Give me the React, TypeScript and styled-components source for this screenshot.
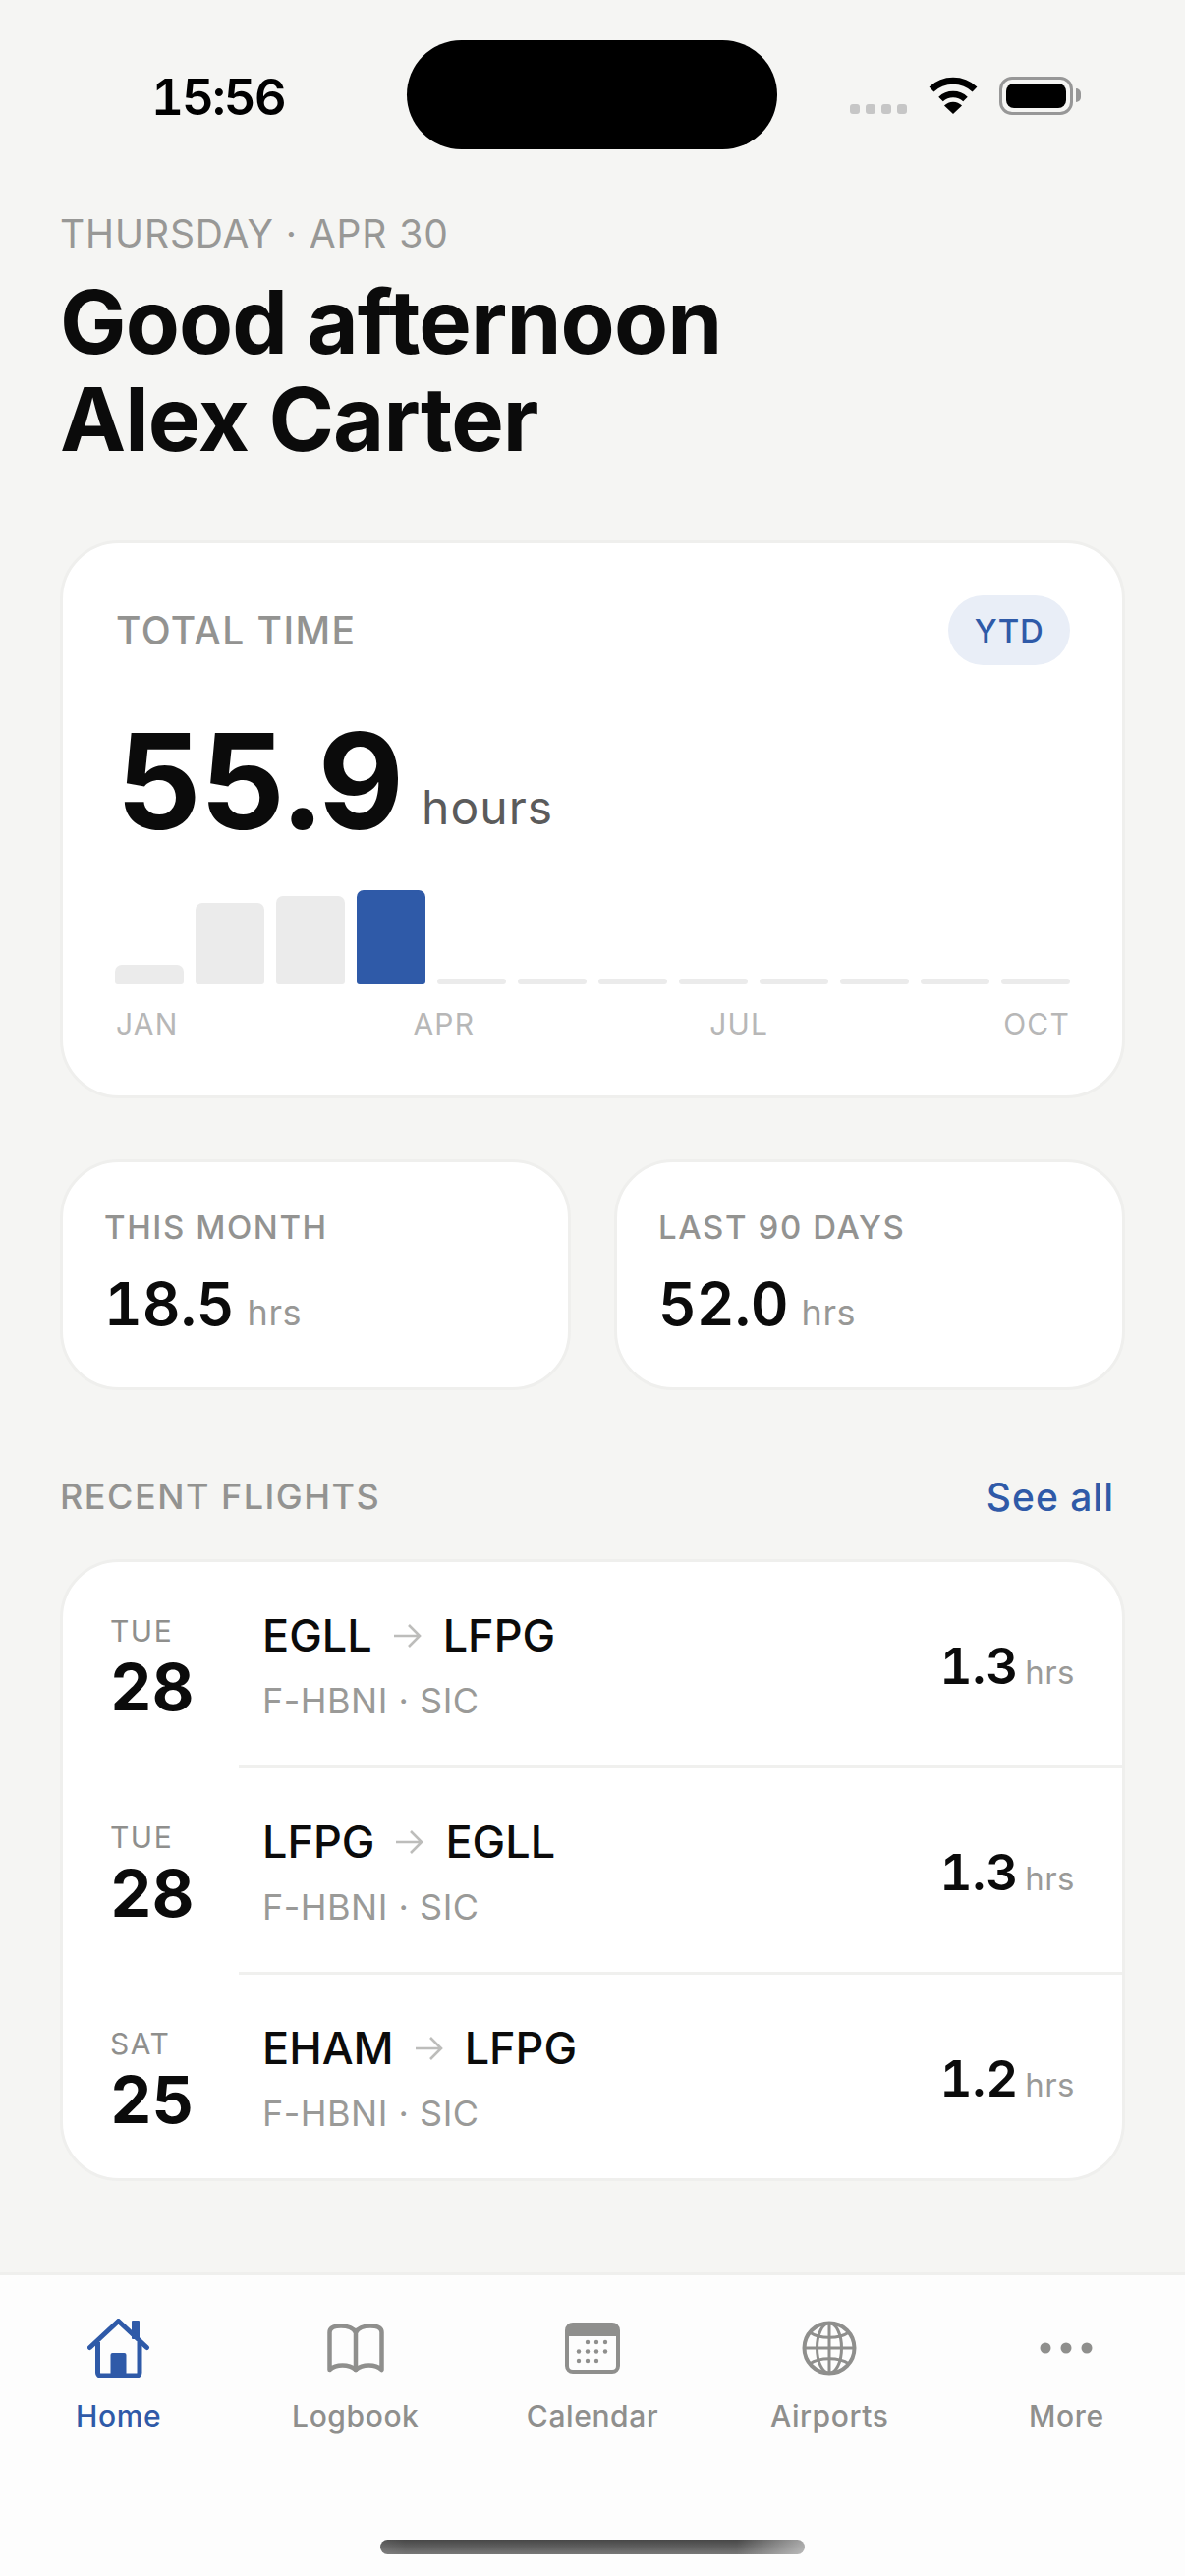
import React from 'react'
import styled, { createGlobalStyle } from 'styled-components'

const blue = '#2f5aa8'
const ink = '#0b0b0b'
const muted = '#8f8f8d'

interface Flight {
  day: string
  date: string
  from: string
  to: string
  hours: string
}

const flights: Flight[] = [
  { day: 'TUE', date: '28', from: 'EGLL', to: 'LFPG', hours: '1.3' },
  { day: 'TUE', date: '28', from: 'LFPG', to: 'EGLL', hours: '1.3' },
  { day: 'SAT', date: '25', from: 'EHAM', to: 'LFPG', hours: '1.2' }
]

const barHeights = [20, 83, 90, 96, 6, 6, 6, 6, 6, 6, 6, 6]

const HomeIcon = () => (
  <svg width="64" height="60" viewBox="0 0 64 60" fill="none">
    <rect x="45" y="2" width="8" height="19" rx="1" fill={blue} />
    <path d="M2.5 29.5 L31.5 2.5 L60.5 29.5" stroke={blue} strokeWidth="5" strokeLinecap="round" strokeLinejoin="round" />
    <path d="M10.5 24 V55 a3 3 0 0 0 3 3 H50 a3 3 0 0 0 3 -3 V24" stroke={blue} strokeWidth="5" />
    <rect x="23.5" y="35" width="16" height="23" rx="2" fill={blue} />
  </svg>
)

const BookIcon = () => (
  <svg width="58" height="50" viewBox="0 0 58 50" fill="none" stroke={muted} strokeWidth="4.5" strokeLinecap="round" strokeLinejoin="round">
    <path d="M29 9 C26 4 20 2.5 14 2.5 C8 2.5 2.5 4 2.5 9 V47 C9 41 22 41 29 47 C36 41 49 41 55.5 47 V9 C55.5 4 50 2.5 44 2.5 C38 2.5 32 4 29 9 Z" />
    <path d="M29 9 V47" />
  </svg>
)

const calendarDots = [
  [23, 20], [32, 20], [41, 20],
  [14, 29.5], [23, 29.5], [32, 29.5], [41, 29.5],
  [14, 39], [23, 39], [32, 39]
]

const CalendarIcon = () => (
  <svg width="56" height="52" viewBox="0 0 56 52" fill="none">
    <rect x="2" y="2" width="52" height="48" rx="6" stroke={muted} strokeWidth="4" />
    <path d="M2 13 V7 a5 5 0 0 1 5 -5 H49 a5 5 0 0 1 5 5 V13 Z" fill={muted} stroke={muted} strokeWidth="2" />
    {calendarDots.map(([x, y]) => (
      <circle key={`${x}-${y}`} cx={x} cy={y} r="2.2" fill={muted} />
    ))}
  </svg>
)

const GlobeIcon = () => (
  <svg width="56" height="56" viewBox="0 0 56 56" fill="none" stroke={muted}>
    <circle cx="28" cy="28" r="25.5" strokeWidth="4" />
    <ellipse cx="28" cy="28" rx="12.5" ry="25.5" strokeWidth="3" />
    <path d="M28 3 V53 M3 28 H53" strokeWidth="3" />
    <path d="M8 12 C18 19 38 19 48 12 M8 44 C18 37 38 37 48 44" strokeWidth="3" />
  </svg>
)

const MoreIcon = () => (
  <svg width="54" height="12" viewBox="0 0 54 12" fill={muted}>
    <circle cx="6" cy="6" r="5.5" />
    <circle cx="27" cy="6" r="5.5" />
    <circle cx="48" cy="6" r="5.5" />
  </svg>
)

const WifiIcon = () => (
  <svg width="50" height="38" viewBox="0 0 50 38" fill="none">
    <path d="M3 13 A32 32 0 0 1 47 13" stroke="#000" strokeWidth="7" />
    <path d="M12.5 23 A18 18 0 0 1 37.5 23" stroke="#000" strokeWidth="6.5" />
    <path d="M25 38 L16 29.5 A12.5 12.5 0 0 1 34 29.5 Z" fill="#000" />
  </svg>
)

const RouteArrow = () => (
  <svg width="28" height="26" viewBox="0 0 28 26" fill="none" stroke="#bdbdbb" strokeWidth="2.6">
    <path d="M0 13 H26 M15 2 L26 13 L15 24" />
  </svg>
)

const tabs = [
  { label: 'Home', icon: <HomeIcon />, active: true },
  { label: 'Logbook', icon: <BookIcon />, active: false },
  { label: 'Calendar', icon: <CalendarIcon />, active: false },
  { label: 'Airports', icon: <GlobeIcon />, active: false },
  { label: 'More', icon: <MoreIcon />, active: false }
]

const App = () => {
  return (
    <Page>
      <GlobalStyle />
      <StatusBar>
        <Clock>15:56</Clock>
        <Island />
        <StatusIcons>
          <SignalDots>
            <SignalDot />
            <SignalDot />
            <SignalDot />
            <SignalDot />
          </SignalDots>
          <WifiIcon />
          <Battery>
            <BatteryFill />
          </Battery>
        </StatusIcons>
      </StatusBar>
      <Content>
        <DateLine>THURSDAY · APR 30</DateLine>
        <Greeting>
          Good afternoon
          <br />
          Alex Carter
        </Greeting>
        <HeroCard>
          <HeroHead>
            <CardLabel>TOTAL TIME</CardLabel>
            <Pill>YTD</Pill>
          </HeroHead>
          <HeroValue>
            <BigNumber>55.9</BigNumber>
            <BigUnit>hours</BigUnit>
          </HeroValue>
          <Chart>
            {barHeights.map((h, i) => (
              <Bar key={i} $height={h} $active={i === 3} />
            ))}
          </Chart>
          <Months>
            <span>JAN</span>
            <span>APR</span>
            <span>JUL</span>
            <span>OCT</span>
          </Months>
        </HeroCard>
        <StatsRow>
          <StatCard>
            <StatLabel>THIS MONTH</StatLabel>
            <StatValue>
              <StatNumber>18.5</StatNumber>
              <StatUnit>hrs</StatUnit>
            </StatValue>
          </StatCard>
          <StatCard>
            <StatLabel>LAST 90 DAYS</StatLabel>
            <StatValue>
              <StatNumber>52.0</StatNumber>
              <StatUnit>hrs</StatUnit>
            </StatValue>
          </StatCard>
        </StatsRow>
        <SectionHead>
          <SectionTitle>RECENT FLIGHTS</SectionTitle>
          <SeeAll>See all</SeeAll>
        </SectionHead>
        <FlightList>
          {flights.map((f, i) => (
            <FlightRow key={i}>
              <DateCol>
                <Day>{f.day}</Day>
                <DayNumber>{f.date}</DayNumber>
              </DateCol>
              <RouteCol $divider={i < flights.length - 1}>
                <RouteInfo>
                  <Route>
                    {f.from}
                    <RouteArrow />
                    {f.to}
                  </Route>
                  <Aircraft>F-HBNI · SIC</Aircraft>
                </RouteInfo>
                <Duration>
                  <DurationNumber>{f.hours}</DurationNumber>
                  <DurationUnit>hrs</DurationUnit>
                </Duration>
              </RouteCol>
            </FlightRow>
          ))}
        </FlightList>
      </Content>
      <TabBar>
        <Tabs>
          {tabs.map((t) => (
            <Tab key={t.label} $active={t.active}>
              <TabIcon>{t.icon}</TabIcon>
              {t.label}
            </Tab>
          ))}
        </Tabs>
        <HomeIndicator />
      </TabBar>
    </Page>
  )
}

const GlobalStyle = createGlobalStyle`
  * {
    box-sizing: border-box;
  }
  body {
    margin: 0;
    font-family: Inter, 'Liberation Sans', sans-serif;
    background: #f5f5f3;
  }
`

const Page = styled.div`
  width: 1206px;
  height: 2622px;
  display: flex;
  flex-direction: column;
  overflow: hidden;
  background: #f5f5f3;
`

const StatusBar = styled.div`
  height: 214px;
  flex: none;
  display: flex;
  align-items: flex-start;
  padding: 41px 106px 0 154px;
`

const Clock = styled.div`
  width: 260px;
  margin-top: 32px;
  font-size: 51px;
  line-height: 51px;
  font-weight: 600;
  color: #000;
  letter-spacing: -2px;
  font-variant-numeric: tabular-nums;
`

const Island = styled.div`
  width: 377px;
  height: 111px;
  border-radius: 56px;
  background: #000;
`

const StatusIcons = styled.div`
  margin-left: 74px;
  margin-top: 37px;
  display: flex;
  align-items: flex-start;
  gap: 22px;
`

const SignalDots = styled.div`
  display: flex;
  gap: 6px;
  margin-top: 28px;
`

const SignalDot = styled.div`
  width: 10px;
  height: 10px;
  border-radius: 3px;
  background: #c6c6c6;
`

const Battery = styled.div`
  position: relative;
  width: 75px;
  height: 39px;
  padding: 4px;
  border: 3px solid #979797;
  border-radius: 13px;
  &::after {
    content: '';
    position: absolute;
    right: -11px;
    top: 9px;
    width: 5px;
    height: 14px;
    border-radius: 0 6px 6px 0;
    background: #979797;
  }
`

const BatteryFill = styled.div`
  width: 100%;
  height: 100%;
  border-radius: 8px;
  background: #000;
`

const Content = styled.div`
  flex: 1;
  padding: 0 61px;
`

const DateLine = styled.div`
  font-size: 39px;
  line-height: 48px;
  letter-spacing: 0.9px;
  color: #989896;
  margin-bottom: 16px;
`

const Greeting = styled.h1`
  margin: 0 0 74px;
  font-size: 90px;
  line-height: 99px;
  font-weight: 700;
  letter-spacing: -0.9px;
  color: ${ink};
`

const Card = styled.div`
  background: #fff;
  border: 3px solid #efefed;
  border-radius: 60px;
`

const HeroCard = styled(Card)`
  height: 568px;
  padding: 53px 53px 0 53px;
`

const HeroHead = styled.div`
  display: flex;
  justify-content: space-between;
  align-items: center;
`

const CardLabel = styled.div`
  margin-left: 1px;
  font-size: 39px;
  font-weight: 500;
  letter-spacing: 1.4px;
  color: #939391;
`

const Pill = styled.div`
  width: 124px;
  height: 71px;
  border-radius: 36px;
  background: #e9eef7;
  color: ${blue};
  font-size: 33px;
  font-weight: 500;
  letter-spacing: 0.6px;
  display: flex;
  align-items: center;
  justify-content: center;
`

const HeroValue = styled.div`
  margin-top: 43px;
  height: 172px;
  display: flex;
  align-items: flex-start;
  gap: 20px;
  padding-left: 2px;
`

const BigNumber = styled.div`
  font-size: 135px;
  line-height: 150px;
  font-weight: 700;
  letter-spacing: -2px;
  color: ${ink};
  font-variant-numeric: tabular-nums;
`

const BigUnit = styled.div`
  margin-top: 73px;
  font-size: 48px;
  line-height: 58px;
  letter-spacing: 1px;
  color: #5b5b5b;
`

const Chart = styled.div`
  height: 110px;
  margin-top: 0;
  display: flex;
  align-items: flex-end;
  gap: 12px;
`

const Bar = styled.div<{ $height: number; $active: boolean }>`
  flex: 1;
  height: ${(p) => p.$height}px;
  border-radius: ${(p) => (p.$height > 10 ? '7px 7px 3px 3px' : '3px')};
  background: ${(p) => (p.$active ? blue : '#ebebeb')};
`

const Months = styled.div`
  margin-top: 22px;
  padding-left: 1px;
  display: flex;
  justify-content: space-between;
  font-size: 30px;
  line-height: 36px;
  letter-spacing: 1.2px;
  color: #b7b7b7;
`

const StatsRow = styled.div`
  margin-top: 62px;
  display: grid;
  grid-template-columns: 1fr 1fr;
  gap: 44px;
`

const StatCard = styled(Card)`
  height: 235px;
  padding: 44px 42px 0;
`

const StatLabel = styled.div`
  font-size: 33px;
  line-height: 44px;
  font-weight: 500;
  letter-spacing: 1.6px;
  color: #939391;
`

const StatValue = styled.div`
  margin-top: 18px;
  display: flex;
  align-items: baseline;
  gap: 13px;
`

const StatNumber = styled.div`
  font-size: 60px;
  line-height: 76px;
  font-weight: 600;
  color: ${ink};
  font-variant-numeric: tabular-nums;
`

const StatUnit = styled.div`
  font-size: 36px;
  letter-spacing: 0.6px;
  color: #989896;
`

const SectionHead = styled.div`
  margin-top: 78px;
  height: 60px;
  padding-right: 11px;
  display: flex;
  align-items: center;
  justify-content: space-between;
`

const SectionTitle = styled.div`
  font-size: 36px;
  font-weight: 500;
  letter-spacing: 1.5px;
  color: #939391;
`

const SeeAll = styled.div`
  font-size: 39px;
  font-weight: 500;
  letter-spacing: 1px;
  color: ${blue};
`

const FlightList = styled(Card)`
  margin-top: 34px;
  overflow: hidden;
`

const FlightRow = styled.div`
  height: 210px;
  display: flex;
  &:last-child {
    height: 207px;
  }
`

const DateCol = styled.div`
  width: 179px;
  flex: none;
  padding: 54px 0 0 48px;
`

const Day = styled.div`
  font-size: 30px;
  line-height: 32px;
  letter-spacing: 1.5px;
  color: #8f8f8d;
`

const DayNumber = styled.div`
  margin-top: 3px;
  font-size: 66px;
  line-height: 76px;
  font-weight: 700;
  color: ${ink};
  font-variant-numeric: tabular-nums;
`

const RouteCol = styled.div<{ $divider: boolean }>`
  flex: 1;
  display: flex;
  justify-content: space-between;
  border-bottom: ${(p) => (p.$divider ? '3px solid #f0f0ee' : 'none')};
  padding: 48px 48px 0 24px;
`

const RouteInfo = styled.div`
  display: flex;
  flex-direction: column;
`

const Route = styled.div`
  display: flex;
  align-items: center;
  gap: 22px;
  font-size: 45px;
  line-height: 54px;
  font-weight: 500;
  color: ${ink};
`

const Aircraft = styled.div`
  margin-top: 17px;
  font-size: 36px;
  line-height: 44px;
  letter-spacing: 0.5px;
  color: #9a9a98;
`

const Duration = styled.div`
  margin-top: 28px;
  display: flex;
  align-items: baseline;
  gap: 7px;
`

const DurationNumber = styled.div`
  font-size: 51px;
  line-height: 60px;
  font-weight: 600;
  color: ${ink};
  font-variant-numeric: tabular-nums;
`

const DurationUnit = styled.div`
  font-size: 33px;
  letter-spacing: 0.5px;
  color: #9a9a98;
`

const TabBar = styled.div`
  flex: none;
  height: 309px;
  display: flex;
  flex-direction: column;
  align-items: center;
  background: #fdfdfd;
  border-top: 3px solid #efefed;
`

const Tabs = styled.div`
  width: 100%;
  display: grid;
  grid-template-columns: repeat(5, 1fr);
  padding-top: 44px;
`

const Tab = styled.div<{ $active: boolean }>`
  display: flex;
  flex-direction: column;
  align-items: center;
  font-size: 30px;
  line-height: 36px;
  font-weight: 500;
  letter-spacing: 0.6px;
  color: ${(p) => (p.$active ? blue : muted)};
`

const TabIcon = styled.div`
  height: 60px;
  margin-bottom: 21px;
  display: flex;
  align-items: center;
  justify-content: center;
`

const HomeIndicator = styled.div`
  margin-top: 108px;
  width: 432px;
  height: 15px;
  border-radius: 8px;
  background: linear-gradient(90deg, rgba(255, 255, 255, 0.08), transparent 6%, transparent 84%, rgba(255, 255, 255, 0.5)),
    linear-gradient(180deg, #474747, #777777);
`

export default App
